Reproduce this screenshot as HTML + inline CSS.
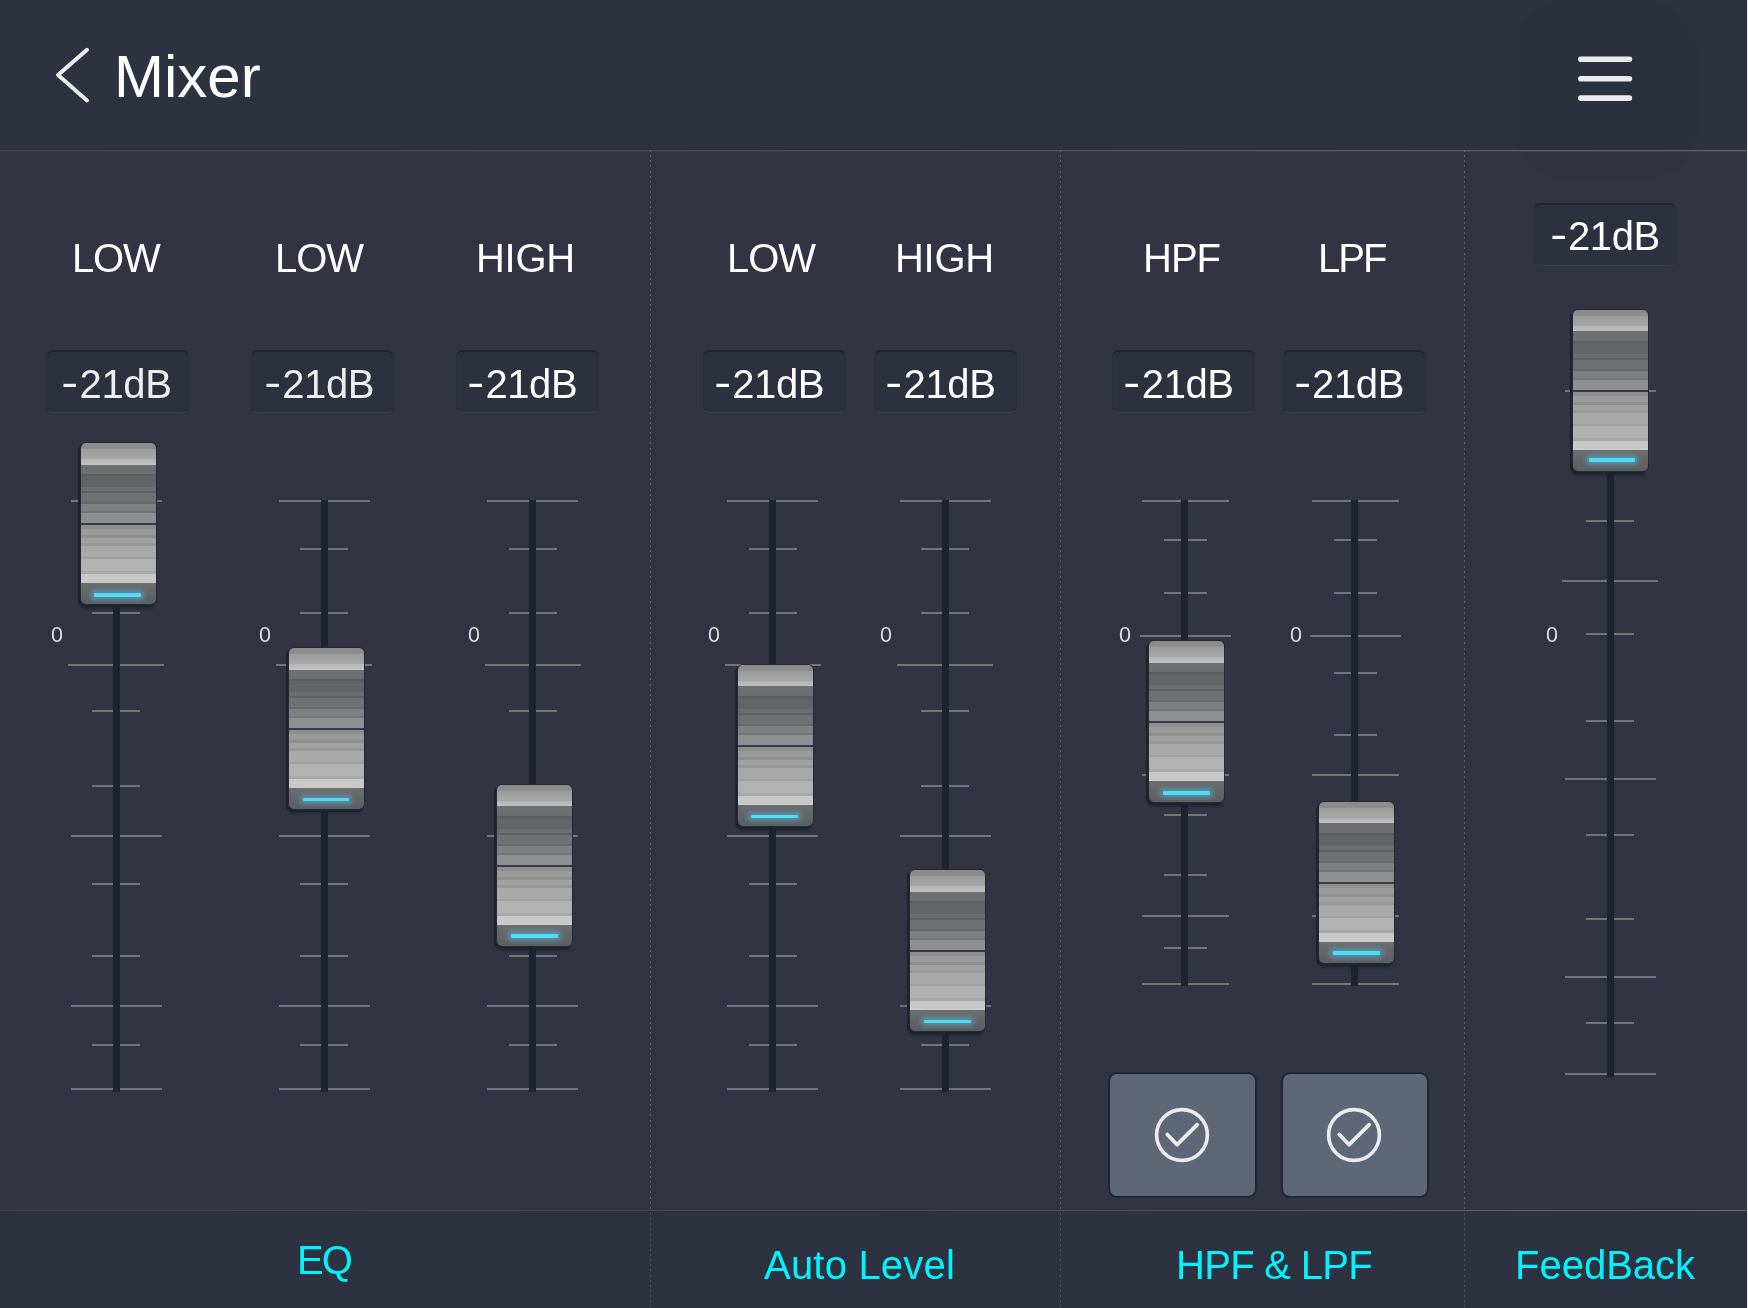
<!DOCTYPE html>
<html><head><meta charset="utf-8"><title>Mixer</title>
<style>
*{margin:0;padding:0;box-sizing:border-box}
html,body{width:1748px;height:1308px;overflow:hidden;background:#323443}
body{position:relative;font-family:"Liberation Sans",sans-serif;color:#f2f2f2}
.abs{position:absolute}
#hdr{position:absolute;left:0;top:0;width:1748px;height:150px;background:#2d3240}
#hline{position:absolute;left:0;top:150px;width:1748px;height:1px;background:linear-gradient(90deg,#40444f 0%,#494d58 50%,#5f646d 100%)}
#hline2{position:absolute;left:0;top:151px;width:1748px;height:1px;background:linear-gradient(90deg,#363946 0%,#393c49 50%,#40434f 100%)}
#ftr{position:absolute;left:0;top:1211px;width:1748px;height:97px;background:#2d3240}
#fline{position:absolute;left:0;top:1210px;width:1748px;height:1px;background:linear-gradient(90deg,#3a3e4a 0%,#464a55 50%,#666a73 100%)}
.vd{position:absolute;top:150px;width:1px;height:1060px;background:repeating-linear-gradient(180deg,#5e616d 0,#5e616d 2px,transparent 2px,transparent 5.13px)}
.vf{position:absolute;top:1213px;width:1px;height:95px;background:repeating-linear-gradient(180deg,#4b4e5a 0,#4b4e5a 2px,transparent 2px,transparent 5.13px)}
#redge{position:absolute;left:1747px;top:0;width:1px;height:1308px;background:#f2f2f2}
#blob{position:absolute;left:1515px;top:4px;width:180px;height:172px;border-radius:46px;background:rgba(0,0,20,.04);filter:blur(2px)}
#title{position:absolute;left:113.5px;top:42px;font-size:60px;letter-spacing:0;line-height:70px;color:#fff;white-space:nowrap}
.lbl{position:absolute;top:235px;font-size:40px;line-height:46px;color:#fff;white-space:nowrap}
.db{position:absolute;width:143px;height:63px;border-radius:6px;background:#2d303e;border:1px solid #2a2d3a;border-top:2px solid #1f2631;border-bottom:1px solid #3b3e4b;text-align:left;font-size:40px;letter-spacing:-.4px;line-height:60px;padding-top:2px;color:#f0f0f0;white-space:nowrap}
.db s{display:inline-block;text-decoration:none;transform:translateY(-2px) scaleX(1.27);margin-right:3.5px}
.lbl,.db,.tab,#title,.zero{will-change:transform}
.trk{position:absolute;width:7px;background:#1d242f}
.tk{position:absolute;height:2px;background:#737478}
.zero{position:absolute;width:30px;margin-left:-15px;text-align:center;font-size:21.5px;line-height:22px;color:#dedede}
.knob{position:absolute;width:75px;height:161px;border-radius:5px;box-shadow:0 0 0 1px #232935,-2px 2px 0 1px #1d2430,-1px 6px 2px -1px rgba(26,32,43,.5);
background:linear-gradient(180deg,
#8a8a8a 0,#8e8e8e 6px,#9c9c9c 6px,#a6a6a6 16px,#b4b4b4 16px,#c2c2c2 21.5px,
#6f7072 21.5px,#6d6e70 31px,#5c5d60 31px,#5c5d60 33px,#636467 33px,#636467 44px,
#6c6d6f 44px,#6c6d6f 48px,#5f6063 48px,#5f6063 50px,#707173 50px,#707173 59px,
#67686a 59px,#67686a 61px,#7f8082 61px,#7f8082 68px,#747577 68px,#747577 70px,
#8e8f91 70px,#8e8f91 80px,#363b47 80px,#363b47 82px,
#8e8e8e 82px,#8e8e8e 86.5px,#9a9a9a 86.5px,#9a9a9a 92px,#8f8f8f 92px,#8f8f8f 95px,
#a2a2a2 95px,#a2a2a2 100px,#989898 100px,#989898 103px,#a9a9a9 103px,#a9a9a9 114px,
#a0a0a0 114px,#a0a0a0 116.5px,#b2b2b2 116.5px,#b2b2b2 128px,#a8a8a8 128px,#a8a8a8 131.5px,
#c8c8c8 131.5px,#cacaca 140px,#6c6d6f 140px,#5c5d60 161px)}
.knob b{position:absolute;left:13.5px;top:149.6px;width:47px;height:3.6px;background:#4fdcf8;border-radius:1px;box-shadow:0 0 5px 3px rgba(79,200,235,.45)}
.btn{position:absolute;top:1074px;width:144.5px;height:121.5px;border-radius:7px;background:#5f6677;box-shadow:0 0 0 1.7px #1e2430}
.tab{position:absolute;font-size:40px;line-height:46px;color:#00f4ff;white-space:nowrap}
</style></head>
<body>
<div id="hdr"></div><div id="ftr"></div>
<div id="blob"></div>
<div id="hline"></div><div id="hline2"></div><div id="fline"></div>
<div class="vd" style="left:650px"></div><div class="vf" style="left:650px"></div>
<div class="vd" style="left:1060px"></div><div class="vf" style="left:1060px"></div>
<div class="vd" style="left:1464px"></div><div class="vf" style="left:1464px"></div>
<svg class="abs" style="left:40px;top:30px" width="70" height="90" viewBox="0 0 70 90"><path d="M47 19.8 L18 45 L47 70.4" fill="none" stroke="#ececec" stroke-width="4" stroke-linecap="round" stroke-linejoin="round"/></svg>
<div id="title">Mixer</div>
<svg class="abs" style="left:1570px;top:50px" width="70" height="60" viewBox="0 0 70 60"><g stroke="#ececec" stroke-width="5.6" stroke-linecap="round"><path d="M10.8 9.2H59.4"/><path d="M10.8 28.8H59.4"/><path d="M10.8 48.1H59.4"/></g></svg>
<div class="lbl" style="left:71.8px;letter-spacing:-1.2px">LOW</div>
<div class="lbl" style="left:275.0px;letter-spacing:-1.0px">LOW</div>
<div class="lbl" style="left:476.4px;letter-spacing:-0.3px">HIGH</div>
<div class="lbl" style="left:727.3px;letter-spacing:-1.0px">LOW</div>
<div class="lbl" style="left:895.0px;letter-spacing:-0.3px">HIGH</div>
<div class="lbl" style="left:1143.0px;letter-spacing:-1.0px">HPF</div>
<div class="lbl" style="left:1317.8px;letter-spacing:-2.0px">LPF</div>
<div class="db" style="left:46.0px;top:350px;padding-left:16.2px;color:#eee"><s>-</s>21dB</div>
<div class="db" style="left:251.0px;top:350px;padding-left:13.8px;color:#eee"><s>-</s>21dB</div>
<div class="db" style="left:455.6px;top:350px;padding-left:12.0px;color:#fff"><s>-</s>21dB</div>
<div class="db" style="left:703.0px;top:350px;padding-left:11.8px;color:#fff"><s>-</s>21dB</div>
<div class="db" style="left:873.7px;top:350px;padding-left:12.2px;color:#fff"><s>-</s>21dB</div>
<div class="db" style="left:1112.2px;top:350px;padding-left:12.4px;color:#fff"><s>-</s>21dB</div>
<div class="db" style="left:1283.1px;top:350px;padding-left:11.7px;color:#fff"><s>-</s>21dB</div>
<div class="db" style="left:1534.1px;top:203px;padding-left:16.6px;color:#fff;width:142px;padding-top:1px"><s>-</s>21dB</div>
<div class="tk" style="left:70.8px;top:500.0px;width:91.0px"></div>
<div class="tk" style="left:92.3px;top:547.8px;width:48.0px"></div>
<div class="tk" style="left:92.3px;top:612.3px;width:48.0px"></div>
<div class="tk" style="left:68.3px;top:664.3px;width:96.0px"></div>
<div class="tk" style="left:92.3px;top:710.2px;width:48.0px"></div>
<div class="tk" style="left:92.3px;top:784.9px;width:48.0px"></div>
<div class="tk" style="left:70.8px;top:834.6px;width:91.0px"></div>
<div class="tk" style="left:92.3px;top:882.5px;width:48.0px"></div>
<div class="tk" style="left:92.3px;top:955.1px;width:48.0px"></div>
<div class="tk" style="left:70.8px;top:1005.0px;width:91.0px"></div>
<div class="tk" style="left:92.3px;top:1044.4px;width:48.0px"></div>
<div class="tk" style="left:70.8px;top:1088.0px;width:91.0px"></div>
<div class="trk" style="left:112.9px;top:500.0px;height:591.7px"></div>
<div class="zero" style="left:57.0px;top:624px">0</div>
<div class="knob" style="left:80.7px;top:443.2px"><b style="left:13.4px;top:149.6px;width:47.0px;height:3.8px"></b></div>
<div class="tk" style="left:278.8px;top:500.0px;width:91.0px"></div>
<div class="tk" style="left:300.3px;top:547.8px;width:48.0px"></div>
<div class="tk" style="left:300.3px;top:612.3px;width:48.0px"></div>
<div class="tk" style="left:276.3px;top:664.3px;width:96.0px"></div>
<div class="tk" style="left:300.3px;top:710.2px;width:48.0px"></div>
<div class="tk" style="left:300.3px;top:784.9px;width:48.0px"></div>
<div class="tk" style="left:278.8px;top:834.6px;width:91.0px"></div>
<div class="tk" style="left:300.3px;top:882.5px;width:48.0px"></div>
<div class="tk" style="left:300.3px;top:955.1px;width:48.0px"></div>
<div class="tk" style="left:278.8px;top:1005.0px;width:91.0px"></div>
<div class="tk" style="left:300.3px;top:1044.4px;width:48.0px"></div>
<div class="tk" style="left:278.8px;top:1088.0px;width:91.0px"></div>
<div class="trk" style="left:320.9px;top:500.0px;height:591.7px"></div>
<div class="zero" style="left:265.0px;top:624px">0</div>
<div class="knob" style="left:289.0px;top:648.3px"><b style="left:13.7px;top:149.8px;width:46.5px;height:3.2px"></b></div>
<div class="tk" style="left:487.0px;top:500.0px;width:91.0px"></div>
<div class="tk" style="left:508.5px;top:547.8px;width:48.0px"></div>
<div class="tk" style="left:508.5px;top:612.3px;width:48.0px"></div>
<div class="tk" style="left:484.5px;top:664.3px;width:96.0px"></div>
<div class="tk" style="left:508.5px;top:710.2px;width:48.0px"></div>
<div class="tk" style="left:508.5px;top:784.9px;width:48.0px"></div>
<div class="tk" style="left:487.0px;top:834.6px;width:91.0px"></div>
<div class="tk" style="left:508.5px;top:882.5px;width:48.0px"></div>
<div class="tk" style="left:508.5px;top:955.1px;width:48.0px"></div>
<div class="tk" style="left:487.0px;top:1005.0px;width:91.0px"></div>
<div class="tk" style="left:508.5px;top:1044.4px;width:48.0px"></div>
<div class="tk" style="left:487.0px;top:1088.0px;width:91.0px"></div>
<div class="trk" style="left:529.1px;top:500.0px;height:591.7px"></div>
<div class="zero" style="left:473.5px;top:624px">0</div>
<div class="knob" style="left:497.0px;top:784.9px"><b></b></div>
<div class="tk" style="left:727.3px;top:500.0px;width:91.0px"></div>
<div class="tk" style="left:748.8px;top:547.8px;width:48.0px"></div>
<div class="tk" style="left:748.8px;top:612.3px;width:48.0px"></div>
<div class="tk" style="left:724.8px;top:664.3px;width:96.0px"></div>
<div class="tk" style="left:748.8px;top:710.2px;width:48.0px"></div>
<div class="tk" style="left:748.8px;top:784.9px;width:48.0px"></div>
<div class="tk" style="left:727.3px;top:834.6px;width:91.0px"></div>
<div class="tk" style="left:748.8px;top:882.5px;width:48.0px"></div>
<div class="tk" style="left:748.8px;top:955.1px;width:48.0px"></div>
<div class="tk" style="left:727.3px;top:1005.0px;width:91.0px"></div>
<div class="tk" style="left:748.8px;top:1044.4px;width:48.0px"></div>
<div class="tk" style="left:727.3px;top:1088.0px;width:91.0px"></div>
<div class="trk" style="left:769.4px;top:500.0px;height:591.7px"></div>
<div class="zero" style="left:713.6px;top:624px">0</div>
<div class="knob" style="left:737.7px;top:665.3px"><b></b></div>
<div class="tk" style="left:899.6px;top:500.0px;width:91.0px"></div>
<div class="tk" style="left:921.1px;top:547.8px;width:48.0px"></div>
<div class="tk" style="left:921.1px;top:612.3px;width:48.0px"></div>
<div class="tk" style="left:897.1px;top:664.3px;width:96.0px"></div>
<div class="tk" style="left:921.1px;top:710.2px;width:48.0px"></div>
<div class="tk" style="left:921.1px;top:784.9px;width:48.0px"></div>
<div class="tk" style="left:899.6px;top:834.6px;width:91.0px"></div>
<div class="tk" style="left:921.1px;top:882.5px;width:48.0px"></div>
<div class="tk" style="left:921.1px;top:955.1px;width:48.0px"></div>
<div class="tk" style="left:899.6px;top:1005.0px;width:91.0px"></div>
<div class="tk" style="left:921.1px;top:1044.4px;width:48.0px"></div>
<div class="tk" style="left:899.6px;top:1088.0px;width:91.0px"></div>
<div class="trk" style="left:941.7px;top:500.0px;height:591.7px"></div>
<div class="zero" style="left:885.9px;top:624px">0</div>
<div class="knob" style="left:910.0px;top:870.0px"><b></b></div>
<div class="tk" style="left:1142.0px;top:500.0px;width:86.5px"></div>
<div class="tk" style="left:1163.8px;top:539.1px;width:43.0px"></div>
<div class="tk" style="left:1163.8px;top:592.0px;width:43.0px"></div>
<div class="tk" style="left:1139.8px;top:634.8px;width:91.0px"></div>
<div class="tk" style="left:1163.8px;top:672.1px;width:43.0px"></div>
<div class="tk" style="left:1163.8px;top:733.6px;width:43.0px"></div>
<div class="tk" style="left:1142.0px;top:774.3px;width:86.5px"></div>
<div class="tk" style="left:1163.8px;top:813.9px;width:43.0px"></div>
<div class="tk" style="left:1163.8px;top:873.7px;width:43.0px"></div>
<div class="tk" style="left:1142.0px;top:914.6px;width:86.5px"></div>
<div class="tk" style="left:1163.8px;top:946.9px;width:43.0px"></div>
<div class="tk" style="left:1142.0px;top:982.6px;width:86.5px"></div>
<div class="trk" style="left:1180.9px;top:500.0px;height:486.0px"></div>
<div class="zero" style="left:1125.0px;top:624px">0</div>
<div class="knob" style="left:1149.0px;top:641.4px"><b></b></div>
<div class="tk" style="left:1312.2px;top:500.0px;width:86.5px"></div>
<div class="tk" style="left:1334.0px;top:539.1px;width:43.0px"></div>
<div class="tk" style="left:1334.0px;top:592.0px;width:43.0px"></div>
<div class="tk" style="left:1310.0px;top:634.8px;width:91.0px"></div>
<div class="tk" style="left:1334.0px;top:672.1px;width:43.0px"></div>
<div class="tk" style="left:1334.0px;top:733.6px;width:43.0px"></div>
<div class="tk" style="left:1312.2px;top:774.3px;width:86.5px"></div>
<div class="tk" style="left:1334.0px;top:813.9px;width:43.0px"></div>
<div class="tk" style="left:1334.0px;top:873.7px;width:43.0px"></div>
<div class="tk" style="left:1312.2px;top:914.6px;width:86.5px"></div>
<div class="tk" style="left:1334.0px;top:946.9px;width:43.0px"></div>
<div class="tk" style="left:1312.2px;top:982.6px;width:86.5px"></div>
<div class="trk" style="left:1351.1px;top:500.0px;height:486.0px"></div>
<div class="zero" style="left:1295.7px;top:624px">0</div>
<div class="knob" style="left:1319.2px;top:801.7px"><b></b></div>
<div class="tk" style="left:1564.9px;top:389.5px;width:91.0px"></div>
<div class="tk" style="left:1586.4px;top:519.8px;width:48.0px"></div>
<div class="tk" style="left:1562.4px;top:580.0px;width:96.0px"></div>
<div class="tk" style="left:1586.4px;top:633.1px;width:48.0px"></div>
<div class="tk" style="left:1586.4px;top:720.1px;width:48.0px"></div>
<div class="tk" style="left:1564.9px;top:778.3px;width:91.0px"></div>
<div class="tk" style="left:1586.4px;top:833.8px;width:48.0px"></div>
<div class="tk" style="left:1586.4px;top:918.3px;width:48.0px"></div>
<div class="tk" style="left:1564.9px;top:976.0px;width:91.0px"></div>
<div class="tk" style="left:1586.4px;top:1022.0px;width:48.0px"></div>
<div class="tk" style="left:1564.9px;top:1072.7px;width:91.0px"></div>
<div class="trk" style="left:1607.0px;top:390.0px;height:686.7px"></div>
<div class="zero" style="left:1551.5px;top:624px">0</div>
<div class="knob" style="left:1573.4px;top:310.3px"><b style="left:15.5px;top:147.6px;width:46.2px;height:4.1px"></b></div>
<div class="btn" style="left:1110.0px"></div>
<svg class="abs" style="left:1147.0px;top:1099.8px" width="70" height="70" viewBox="0 0 70 70"><circle cx="35" cy="35" r="25.4" fill="none" stroke="#ececec" stroke-width="3.6"/><path d="M20.3 34.5 L30.1 44.7 L50.2 24.7" fill="none" stroke="#ececec" stroke-width="3.8" stroke-linecap="round" stroke-linejoin="round"/></svg>
<div class="btn" style="left:1282.7px"></div>
<svg class="abs" style="left:1319.2px;top:1099.8px" width="70" height="70" viewBox="0 0 70 70"><circle cx="35" cy="35" r="25.4" fill="none" stroke="#ececec" stroke-width="3.6"/><path d="M20.3 34.5 L30.1 44.7 L50.2 24.7" fill="none" stroke="#ececec" stroke-width="3.8" stroke-linecap="round" stroke-linejoin="round"/></svg>
<div class="tab" style="left:296.5px;top:1237px;letter-spacing:-2px">EQ</div>
<div class="tab" style="left:764px;top:1242px;letter-spacing:.2px">Auto Level</div>
<div class="tab" style="left:1175.5px;top:1241.5px;letter-spacing:-.7px">HPF &amp; LPF</div>
<div class="tab" style="left:1515px;top:1242px">FeedBack</div>
<div id="redge"></div>
</body></html>
